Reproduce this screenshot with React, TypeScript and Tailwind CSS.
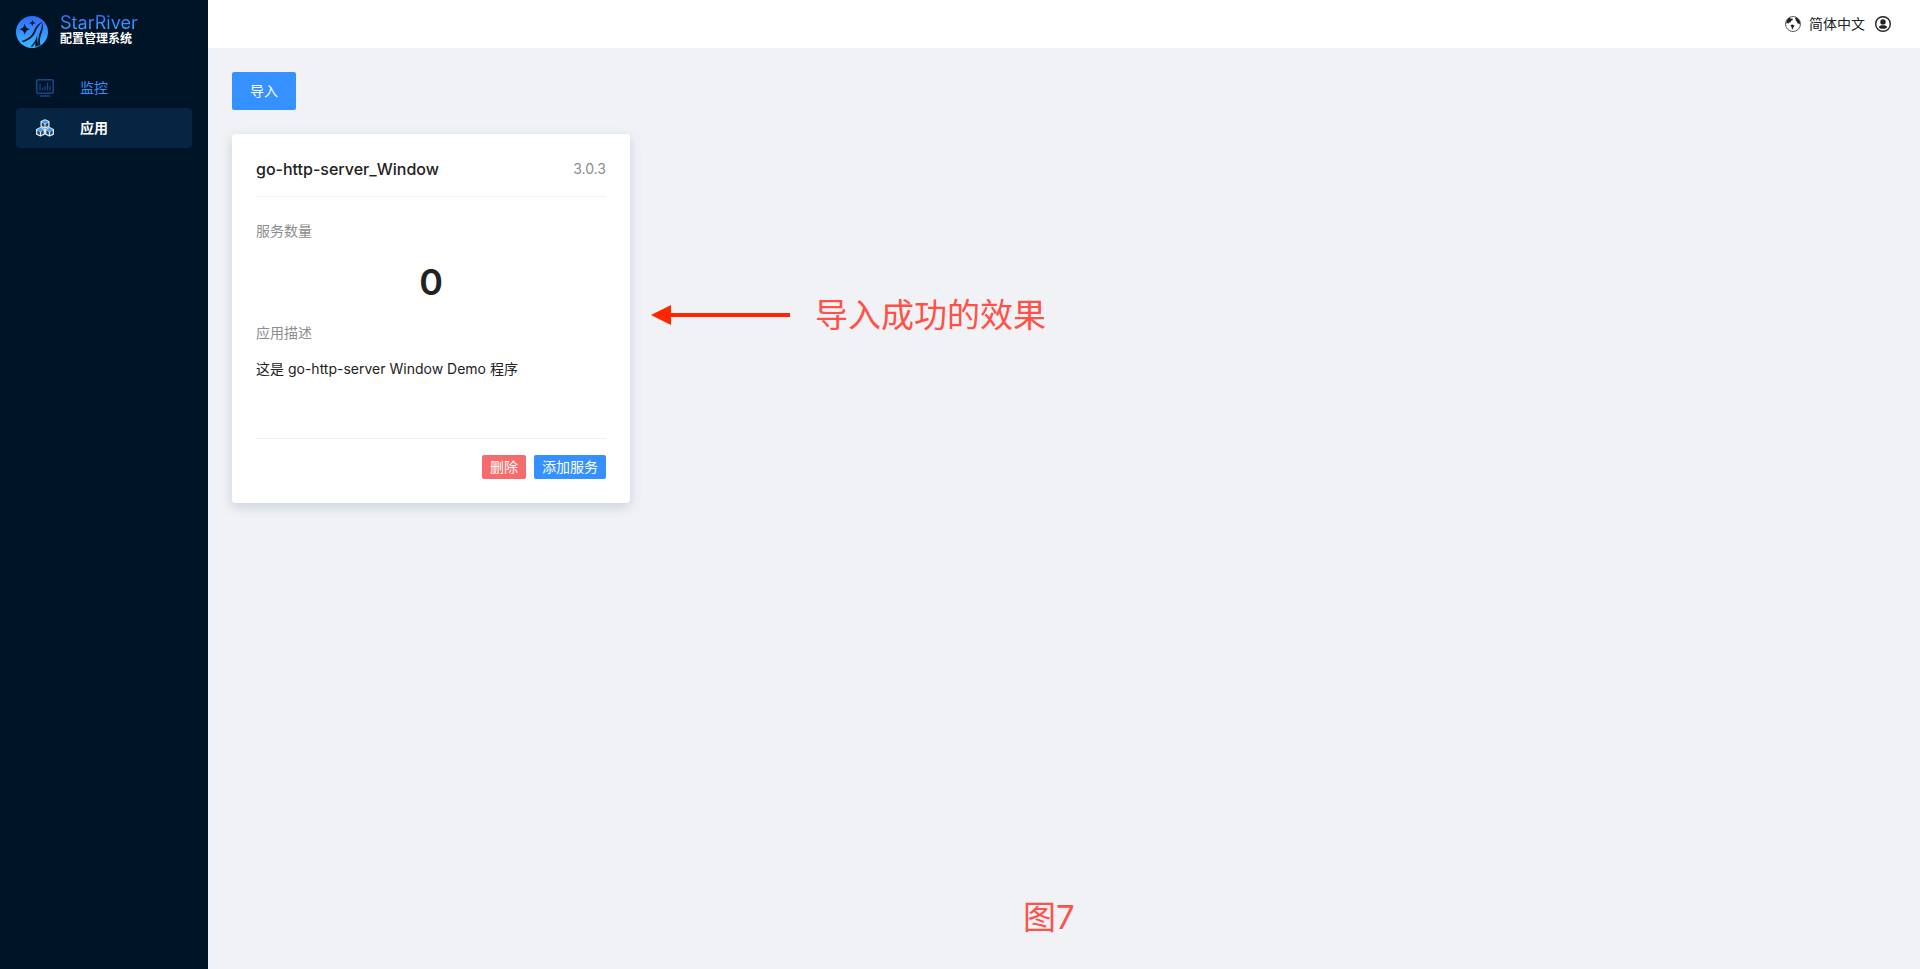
import { clsx } from "clsx";
import type { ReactNode } from "react";

const menuItems = [
  { label: "监控", href: "#monitor", icon: <MonitorIcon />, active: false },
  { label: "应用", href: "#apps", icon: <AppsIcon />, active: true },
];

const apps = [
  {
    name: "go-http-server_Window",
    version: "3.0.3",
    services: 0,
    description: "这是 go-http-server Window Demo 程序",
  },
];

function Logo() {
  return (
    <svg viewBox="0 0 32 32" className="h-8 w-8 shrink-0" aria-hidden="true">
      <defs>
        <linearGradient id="logo-fill" x1="0" y1="0" x2="0" y2="1">
          <stop offset="0" stopColor="#2e6bff" />
          <stop offset="1" stopColor="#3fb8ff" />
        </linearGradient>
      </defs>
      <circle cx="16" cy="16" r="16" fill="url(#logo-fill)" />
      <g fill="#001428">
        <path d="M8.700 7.500c.8 3.700 1.900 4.900 5.600 5.800-3.700.9-4.800 2.100-5.600 5.800-.8-3.700-1.900-4.900-5.600-5.800 3.700-.9 4.800-2.100 5.600-5.800z" />
        <path d="M16.400 3.800c.5 2.100 1.100 2.700 3.200 3.200-2.100.5-2.700 1.100-3.200 3.200-.5-2.100-1.100-2.700-3.200-3.200 2.100-.5 2.700-1.100 3.200-3.200z" />
        <path d="M26.800 5.800C21.500 7.500 19.300 11.500 17.700 15.500 15.600 20.400 11 23.200 5.800 25l1.300 1.200C12.800 24.500 17 21.500 19.200 16.600 20.900 12.400 22.600 9 26.800 5.800z" />
        <path d="M21.300 17.800c-.4 4.800-2.700 9-6.600 12.600l1.800.4c1.300-1.200 2.200-2.600 2.900-4 .1 1.300.1 2.500-.2 4l3.600-1c-1.600-3.700-1.900-7.800-1.500-12z" />
        <path d="M26.300 6.200c1.400 4 .5 7.500-.9 11.300-1.500 4-1.900 7.600-1 11.500l-1.700.8c-1.100-4.400-.7-8.200.9-12.500 1.400-3.700 2.600-6.900 2.700-11.100z" />
      </g>
    </svg>
  );
}

function MonitorIcon() {
  return (
    <svg viewBox="0 0 18 18" className="h-[18px] w-[18px]" fill="none" stroke="#17498a" aria-hidden="true">
      <rect x="0.750" y="0.750" width="16.500" height="13.500" rx="1.500" strokeWidth="1.500" />
      <path d="M4 5v6.500M6.500 8.500v3M9 7v4.500M11.500 3.500v8M14 7v4.500" strokeWidth="1.200" />
      <path d="M4.500 17h9" strokeWidth="1.500" strokeLinecap="round" />
    </svg>
  );
}

function Cube({ x, y }: { x: number; y: number }) {
  return (
    <g transform={`translate(${x} ${y})`} strokeLinejoin="round">
      <path d="M0-4.200 3.900-2.300V2.300L0 4.200-3.900 2.300V-2.300z" fill="#2a4560" stroke="#dfe9f2" strokeWidth="1.300" />
      <path d="M0 0V4.200" stroke="#dfe9f2" strokeWidth="1.200" />
      <path d="M-3.900-2.200 0-.1 3.900-2.200" fill="none" stroke="#dfe9f2" strokeWidth="1" />
      <ellipse cx="0" cy="-2" rx="2.900" ry="1.600" fill="#3f9dff" />
    </g>
  );
}

function AppsIcon() {
  return (
    <svg viewBox="0 0 18 18" className="h-[18px] w-[18px]" aria-hidden="true">
      <Cube x={9} y={5} />
      <Cube x={4.500} y={12.800} />
      <Cube x={13.500} y={12.800} />
    </svg>
  );
}

function GlobeIcon() {
  return (
    <svg viewBox="0 0 16 16" className="h-4 w-4" aria-hidden="true">
      <circle cx="8" cy="8" r="7.500" fill="none" stroke="#333" strokeWidth="0.800" />
      <g fill="#222">
        <path d="M1.800 4.400C2.600 3 3.800 2 5.200 1.500l.4 1.200 1.800-.2.500 1.400-1.700.9-.6 1.500-1.500.2-.9 1.200-1-.6-.9.700z" />
        <path d="M5.800 9l1.600-.5 2 .9-.4 1.400-1 .9-.2 1.900-.9-.6-.3-2-.9-.9z" />
        <path d="M9.800 2.200l1.200-.6c2.100.9 3.500 2.500 4.100 4.700l-.5 2.300-1.200-1.200-1.300-.3-.2-1.600-1.200-.7.200-1.200z" />
      </g>
    </svg>
  );
}

function UserIcon() {
  return (
    <svg viewBox="0 0 16 16" className="h-4 w-4" aria-hidden="true">
      <circle cx="8" cy="8" r="7.300" fill="none" stroke="#222" strokeWidth="1.400" />
      <circle cx="8" cy="5.900" r="2.700" fill="#222" />
      <path d="M3.700 11.200c1-1.400 2.300-2 3.300-2h2c1 0 2.300.6 3.300 2-1 1.100-2.500 1.600-4.300 1.600s-3.300-.5-4.300-1.600z" fill="#222" />
    </svg>
  );
}

function TagButton({ className, children }: { className: string; children: ReactNode }) {
  return (
    <button type="button" className={clsx("h-6 rounded-xs px-2 text-sm leading-[22px] text-white", className)}>
      {children}
    </button>
  );
}

function Sidebar() {
  return (
    <aside className="w-52 shrink-0 bg-[#001428]">
      <div className="flex h-16 items-center gap-3 px-4">
        <Logo />
        <div className="pb-0.5">
          <p className="bg-linear-to-b from-[#2e6bff] to-[#3fb0ff] bg-clip-text text-lg leading-4 text-transparent">
            StarRiver
          </p>
          <p className="text-xs leading-4 font-bold text-white">配置管理系统</p>
        </div>
      </div>
      <nav className="px-4 pt-1">
        {menuItems.map((item) => (
          <a
            key={item.label}
            href={item.href}
            className={clsx(
              "flex h-10 items-center rounded px-5 text-sm",
              item.active ? "bg-[#062543] font-bold text-white" : "text-[#3491fa]",
            )}
          >
            <span className="w-11">{item.icon}</span>
            {item.label}
          </a>
        ))}
      </nav>
    </aside>
  );
}

function AppCard({ app }: { app: (typeof apps)[number] }) {
  return (
    <article className="rounded bg-white p-6 shadow-[0_4px_12px_rgba(100,130,170,0.28)]">
      <header className="flex items-center justify-between border-b border-[#f0f0f0] pb-4">
        <h2 className="text-base leading-[22px] font-medium">{app.name}</h2>
        <span className="text-sm leading-[22px] text-[#8c8c8c]">{app.version}</span>
      </header>
      <p className="pt-[23px] text-sm leading-[22px] text-[#8c8c8c]">服务数量</p>
      <p className="text-center text-4xl leading-[80px] font-semibold">{app.services}</p>
      <p className="text-sm leading-[22px] text-[#8c8c8c]">应用描述</p>
      <p className="mt-3.5 min-h-20 text-sm leading-[22px]">{app.description}</p>
      <footer className="flex justify-end gap-2 border-t border-[#f0f0f0] pt-4">
        <TagButton className="bg-[#f56c6c]">删除</TagButton>
        <TagButton className="bg-[#3491ff]">添加服务</TagButton>
      </footer>
    </article>
  );
}

export default function App() {
  return (
    <div className="relative flex min-h-screen bg-[#f0f2f5] font-[Inter,'Noto_Sans_CJK_SC',sans-serif] text-[#222]">
      <Sidebar />
      <div className="min-w-0 flex-1">
        <header className="flex h-12 items-center justify-end bg-white pr-[29px] text-sm">
          <button type="button" className="flex items-center gap-2">
            <GlobeIcon />
            简体中文
          </button>
          <button type="button" className="ml-2.5" aria-label="User">
            <UserIcon />
          </button>
        </header>
        <main className="p-6">
          <button type="button" className="h-[38px] w-16 rounded-xs bg-[#3491ff] text-sm text-white">
            导入
          </button>
          <div className="mt-6 grid grid-cols-4 gap-6">
            {apps.map((app) => (
              <AppCard key={app.name} app={app} />
            ))}
          </div>
        </main>
      </div>

      <div className="absolute top-[291px] left-[651px] flex items-center gap-6 text-[33px] leading-[48px] text-[#ff5147]">
        <svg viewBox="0 0 140 20" className="h-5 w-[140px]" fill="#ff2600" aria-hidden="true">
          <path d="M0 10 20 0v8h119v4H20v8z" />
        </svg>
        <span>导入成功的效果</span>
      </div>
      <p className="absolute top-[893px] left-[1023px] text-[33px] leading-[48px] text-[#ff5147]">图7</p>
    </div>
  );
}
